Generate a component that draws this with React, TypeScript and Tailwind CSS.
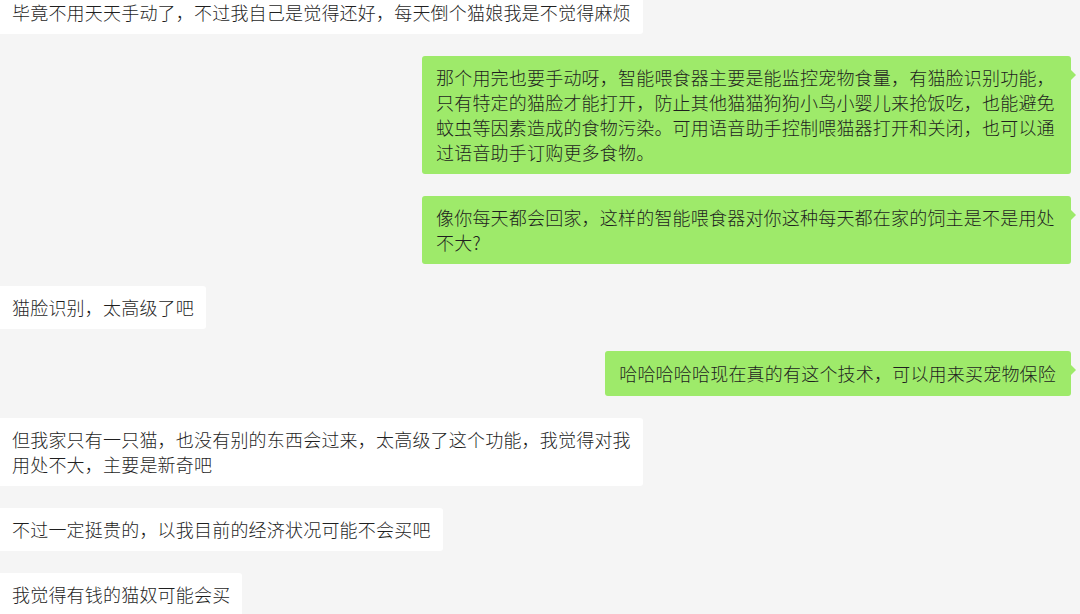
import React from "react";

const font = { fontFamily: '"Noto Sans CJK SC", "Noto Sans", sans-serif' };

function Left({ lines }: { lines: string[] }) {
  return (
    <div className="self-start bg-white rounded-r-[3px] pl-[12px] pr-[12px] py-[9px] text-[18px] leading-[25px] tracking-[0.2px] font-light text-[#1f1f1f]">
      {lines.map((l, i) => (
        <div key={i} className="whitespace-nowrap">{l}</div>
      ))}
    </div>
  );
}

function Right({ lines, wide, tall }: { lines: string[]; wide?: boolean; tall?: boolean }) {
  return (
    <div className={"relative self-end mr-[9px] bg-[#9eea6a] rounded-[3px] pl-[14px] pr-[15px] text-[18px] leading-[25px] tracking-[0.2px] font-light text-[#1f1f1f] " + (wide ? "w-[649px] " : "") + (tall ? "py-[10px]" : "py-[9px]")}>
      {lines.map((l, i) => (
        <div key={i} className="whitespace-nowrap">{l}</div>
      ))}
      <div className="absolute right-[-5px] top-[14px] w-0 h-0 border-y-[5px] border-y-transparent border-l-[5px] border-l-[#9eea6a]" />
    </div>
  );
}

export default function App() {
  return (
    <div style={font} className="w-[1080px] h-[614px] overflow-hidden bg-[#f5f5f5]">
      <div className="flex flex-col gap-[22px] mt-[-9px]">
        <Left lines={["毕竟不用天天手动了，不过我自己是觉得还好，每天倒个猫娘我是不觉得麻烦"]} />
        <Right
          wide
          lines={[
            "那个用完也要手动呀，智能喂食器主要是能监控宠物食量，有猫脸识别功能，",
            "只有特定的猫脸才能打开，防止其他猫猫狗狗小鸟小婴儿来抢饭吃，也能避免",
            "蚊虫等因素造成的食物污染。可用语音助手控制喂猫器打开和关闭，也可以通",
            "过语音助手订购更多食物。",
          ]}
        />
        <Right
          wide
          lines={[
            "像你每天都会回家，这样的智能喂食器对你这种每天都在家的饲主是不是用处",
            "不大?",
          ]}
        />
        <Left lines={["猫脸识别，太高级了吧"]} />
        <Right tall lines={["哈哈哈哈哈现在真的有这个技术，可以用来买宠物保险"]} />
        <Left
          lines={[
            "但我家只有一只猫，也没有别的东西会过来，太高级了这个功能，我觉得对我",
            "用处不大，主要是新奇吧",
          ]}
        />
        <Left lines={["不过一定挺贵的，以我目前的经济状况可能不会买吧"]} />
        <Left lines={["我觉得有钱的猫奴可能会买"]} />
      </div>
    </div>
  );
}
